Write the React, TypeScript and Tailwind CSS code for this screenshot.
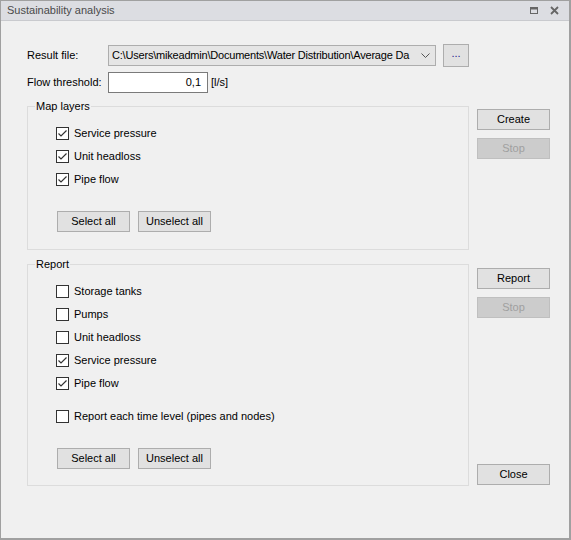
import React from 'react';

const font = { fontFamily: '"Liberation Sans", Arial, sans-serif' };

const Check = ({ checked, label }: { checked?: boolean; label: string }) => (
    <label className="flex items-center h-[23px] text-[11px] text-black whitespace-nowrap">
        <span className="w-[13px] h-[13px] border border-[#333333] bg-white flex items-center justify-center shrink-0">
            {checked && (
                <svg width="11" height="11" viewBox="0 0 11 11">
                    <polyline points="1.5,5.5 4,8 9.5,2.5" fill="none" stroke="#333333" strokeWidth="1.2" />
                </svg>
            )}
        </span>
        <span className="ml-[5px]">{label}</span>
    </label>
);

const Button = ({ children, disabled, className = '' }: { children: React.ReactNode; disabled?: boolean; className?: string }) => (
    <button
        className={
            'w-[73px] h-[21px] text-[11px] flex items-center justify-center border ' +
            (disabled ? 'bg-[#cccccc] border-[#bfbfbf] text-[#a0a0a0] ' : 'bg-[#e1e1e1] border-[#adadad] text-black ') +
            className
        }
    >
        {children}
    </button>
);

const Group = ({ title, children, className = '' }: { title: string; children: React.ReactNode; className?: string }) => (
    <fieldset className={'border border-[#dcdcdc] pl-[7px] pt-[8px] ' + className}>
        <legend className="px-[1px] text-[11px] leading-[16px] text-black">{title}</legend>
        <div className="pl-[21px]">{children}</div>
    </fieldset>
);

export default function App() {
    return (
        <div style={font} className="w-[571px] h-[540px] border border-[#a0a0a0] border-r-2 border-b-2 bg-[#f0f0f0] flex flex-col">
            {/* Title bar */}
            <div className="h-[20px] bg-[#dcdde2] border-b border-[#c9cace] flex items-center justify-between pl-[6px] pr-[10px] shrink-0">
                <span className="text-[11px] text-[#4a4a4a]">Sustainability analysis</span>
                <div className="flex items-center gap-[12px]">
                    <svg width="8" height="7" viewBox="0 0 8 7">
                        <rect x="0.5" y="0.5" width="7" height="6" fill="none" stroke="#666" />
                        <rect x="0" y="0" width="8" height="2.5" fill="#666" />
                    </svg>
                    <svg width="9" height="9" viewBox="0 0 9 9">
                        <path d="M1 1 L8 8 M8 1 L1 8" stroke="#666" strokeWidth="1.8" />
                    </svg>
                </div>
            </div>

            <div className="flex gap-[8px] pl-[26px] pt-[23px]">
                {/* Left column */}
                <div className="w-[442px] flex flex-col">
                    <div className="flex items-center h-[23px] whitespace-nowrap">
                        <span className="w-[81px] text-[11px] text-black">Result file:</span>
                        <div className="w-[328px] h-[21px] bg-[#e5e5e5] border border-[#adadad] flex items-center pl-[3px] pr-[5px] text-[11px] tracking-[-0.2px] text-black">
                            <span className="flex-1 overflow-hidden whitespace-nowrap">C:\Users\mikeadmin\Documents\Water Distribution\Average Da</span>
                            <svg width="9" height="6" viewBox="0 0 9 6" className="ml-[6px] shrink-0">
                                <polyline points="0.5,0.5 4.5,4.5 8.5,0.5" fill="none" stroke="#555" />
                            </svg>
                        </div>
                        <button className="ml-[7px] w-[26px] h-[23px] bg-[#e1e1e1] border border-[#adadad] text-[11px] text-[#1a1a8c] leading-none pb-[4px]">...</button>
                    </div>

                    <div className="flex items-center mt-[5px] h-[21px] whitespace-nowrap">
                        <span className="w-[81px] text-[11px] text-black">Flow threshold:</span>
                        <div className="w-[100px] h-[21px] bg-white border border-[#7a7a7a] flex items-center justify-end pr-[6px] text-[11px] text-black">0,1</div>
                        <span className="ml-[3px] text-[11px] text-black">[l/s]</span>
                    </div>

                    <Group title="Map layers" className="mt-[5px] pb-[17px]">
                        <Check checked label="Service pressure" />
                        <Check checked label="Unit headloss" />
                        <Check checked label="Pipe flow" />
                        <div className="flex gap-[8px] mt-[20px] ml-[1px]">
                            <Button>Select all</Button>
                            <Button>Unselect all</Button>
                        </div>
                    </Group>

                    <Group title="Report" className="mt-[6px] pb-[16px]">
                        <Check label="Storage tanks" />
                        <Check label="Pumps" />
                        <Check label="Unit headloss" />
                        <Check checked label="Service pressure" />
                        <Check checked label="Pipe flow" />
                        <div className="mt-[10px]">
                            <Check label="Report each time level (pipes and nodes)" />
                        </div>
                        <div className="flex gap-[8px] mt-[20px] ml-[1px]">
                            <Button>Select all</Button>
                            <Button>Unselect all</Button>
                        </div>
                    </Group>
                </div>

                {/* Right column */}
                <div className="flex flex-col">
                    <Button className="mt-[65px]">Create</Button>
                    <Button disabled className="mt-[8px]">Stop</Button>
                    <Button className="mt-[109px]">Report</Button>
                    <Button disabled className="mt-[8px]">Stop</Button>
                    <Button className="mt-[146px]">Close</Button>
                </div>
            </div>
        </div>
    );
}
